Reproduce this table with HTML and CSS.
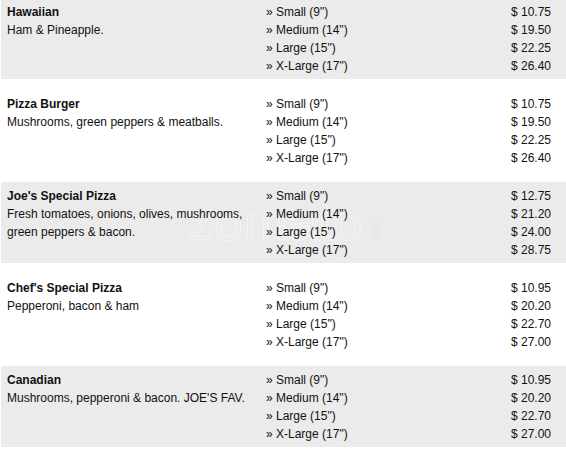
FILE: index.html
```
<!DOCTYPE html>
<html>
<head>
<meta charset="utf-8">
<link rel="stylesheet" href="styles.css">
</head>
<body>
<div class="menu">
  <div class="item shade">
    <div class="info"><div class="name">Hawaiian</div><div class="desc">Ham &amp; Pineapple.</div></div>
    <div class="sizes"><div>» Small (9")</div><div>» Medium (14")</div><div>» Large (15")</div><div>» X-Large (17")</div></div>
    <div class="prices"><div>$ 10.75</div><div>$ 19.50</div><div>$ 22.25</div><div>$ 26.40</div></div>
  </div>
  <div class="item">
    <div class="info"><div class="name">Pizza Burger</div><div class="desc">Mushrooms, green peppers &amp; meatballs.</div></div>
    <div class="sizes"><div>» Small (9")</div><div>» Medium (14")</div><div>» Large (15")</div><div>» X-Large (17")</div></div>
    <div class="prices"><div>$ 10.75</div><div>$ 19.50</div><div>$ 22.25</div><div>$ 26.40</div></div>
  </div>
  <div class="item shade">
    <div class="watermark">zomato<span class="dotcom">.com</span></div>
    <div class="info"><div class="name">Joe's Special Pizza</div><div class="desc">Fresh tomatoes, onions, olives, mushrooms, green peppers &amp; bacon.</div></div>
    <div class="sizes"><div>» Small (9")</div><div>» Medium (14")</div><div>» Large (15")</div><div>» X-Large (17")</div></div>
    <div class="prices"><div>$ 12.75</div><div>$ 21.20</div><div>$ 24.00</div><div>$ 28.75</div></div>
  </div>
  <div class="item">
    <div class="info"><div class="name">Chef's Special Pizza</div><div class="desc">Pepperoni, bacon &amp; ham</div></div>
    <div class="sizes"><div>» Small (9")</div><div>» Medium (14")</div><div>» Large (15")</div><div>» X-Large (17")</div></div>
    <div class="prices"><div>$ 10.95</div><div>$ 20.20</div><div>$ 22.70</div><div>$ 27.00</div></div>
  </div>
  <div class="item shade">
    <div class="info"><div class="name">Canadian</div><div class="desc">Mushrooms, pepperoni &amp; bacon. JOE'S FAV.</div></div>
    <div class="sizes"><div>» Small (9")</div><div>» Medium (14")</div><div>» Large (15")</div><div>» X-Large (17")</div></div>
    <div class="prices"><div>$ 10.95</div><div>$ 20.20</div><div>$ 22.70</div><div>$ 27.00</div></div>
  </div>
</div>
</body>
</html>
```
FILE: styles.css
```
html, body {
  margin: 0;
  padding: 0;
  background: #ffffff;
}
body {
  font-family: "Liberation Sans", Arial, sans-serif;
  font-size: 12px;
  line-height: 18px;
  color: #111111;
  overflow: hidden;
}
.menu {
  display: flex;
  flex-direction: column;
  gap: 11px;
  margin-top: -2px;
  margin-left: 1px;
}
.item {
  position: relative;
  display: grid;
  grid-template-columns: 259px 1fr auto;
  padding: 5px 15px 4px 6px;
  height: 72px;
}
.info, .sizes, .prices {
  position: relative;
  z-index: 1;
}
.shade {
  background: #ebebeb;
}
.name {
  font-weight: bold;
}
.desc {
  width: 245px;
}
.prices {
  text-align: right;
}
.watermark {
  position: absolute;
  z-index: 0;
  left: 186px;
  top: 10px;
  font-size: 52px;
  line-height: 60px;
  color: transparent;
  -webkit-text-stroke: 1px #f3f3f3;
  letter-spacing: 1px;
  pointer-events: none;
}
.dotcom {
  display: inline-block;
  font-size: 9px;
  line-height: 10px;
  transform: rotate(90deg);
  vertical-align: middle;
  -webkit-text-stroke: 0;
  color: #e4e4e4;
}
```
